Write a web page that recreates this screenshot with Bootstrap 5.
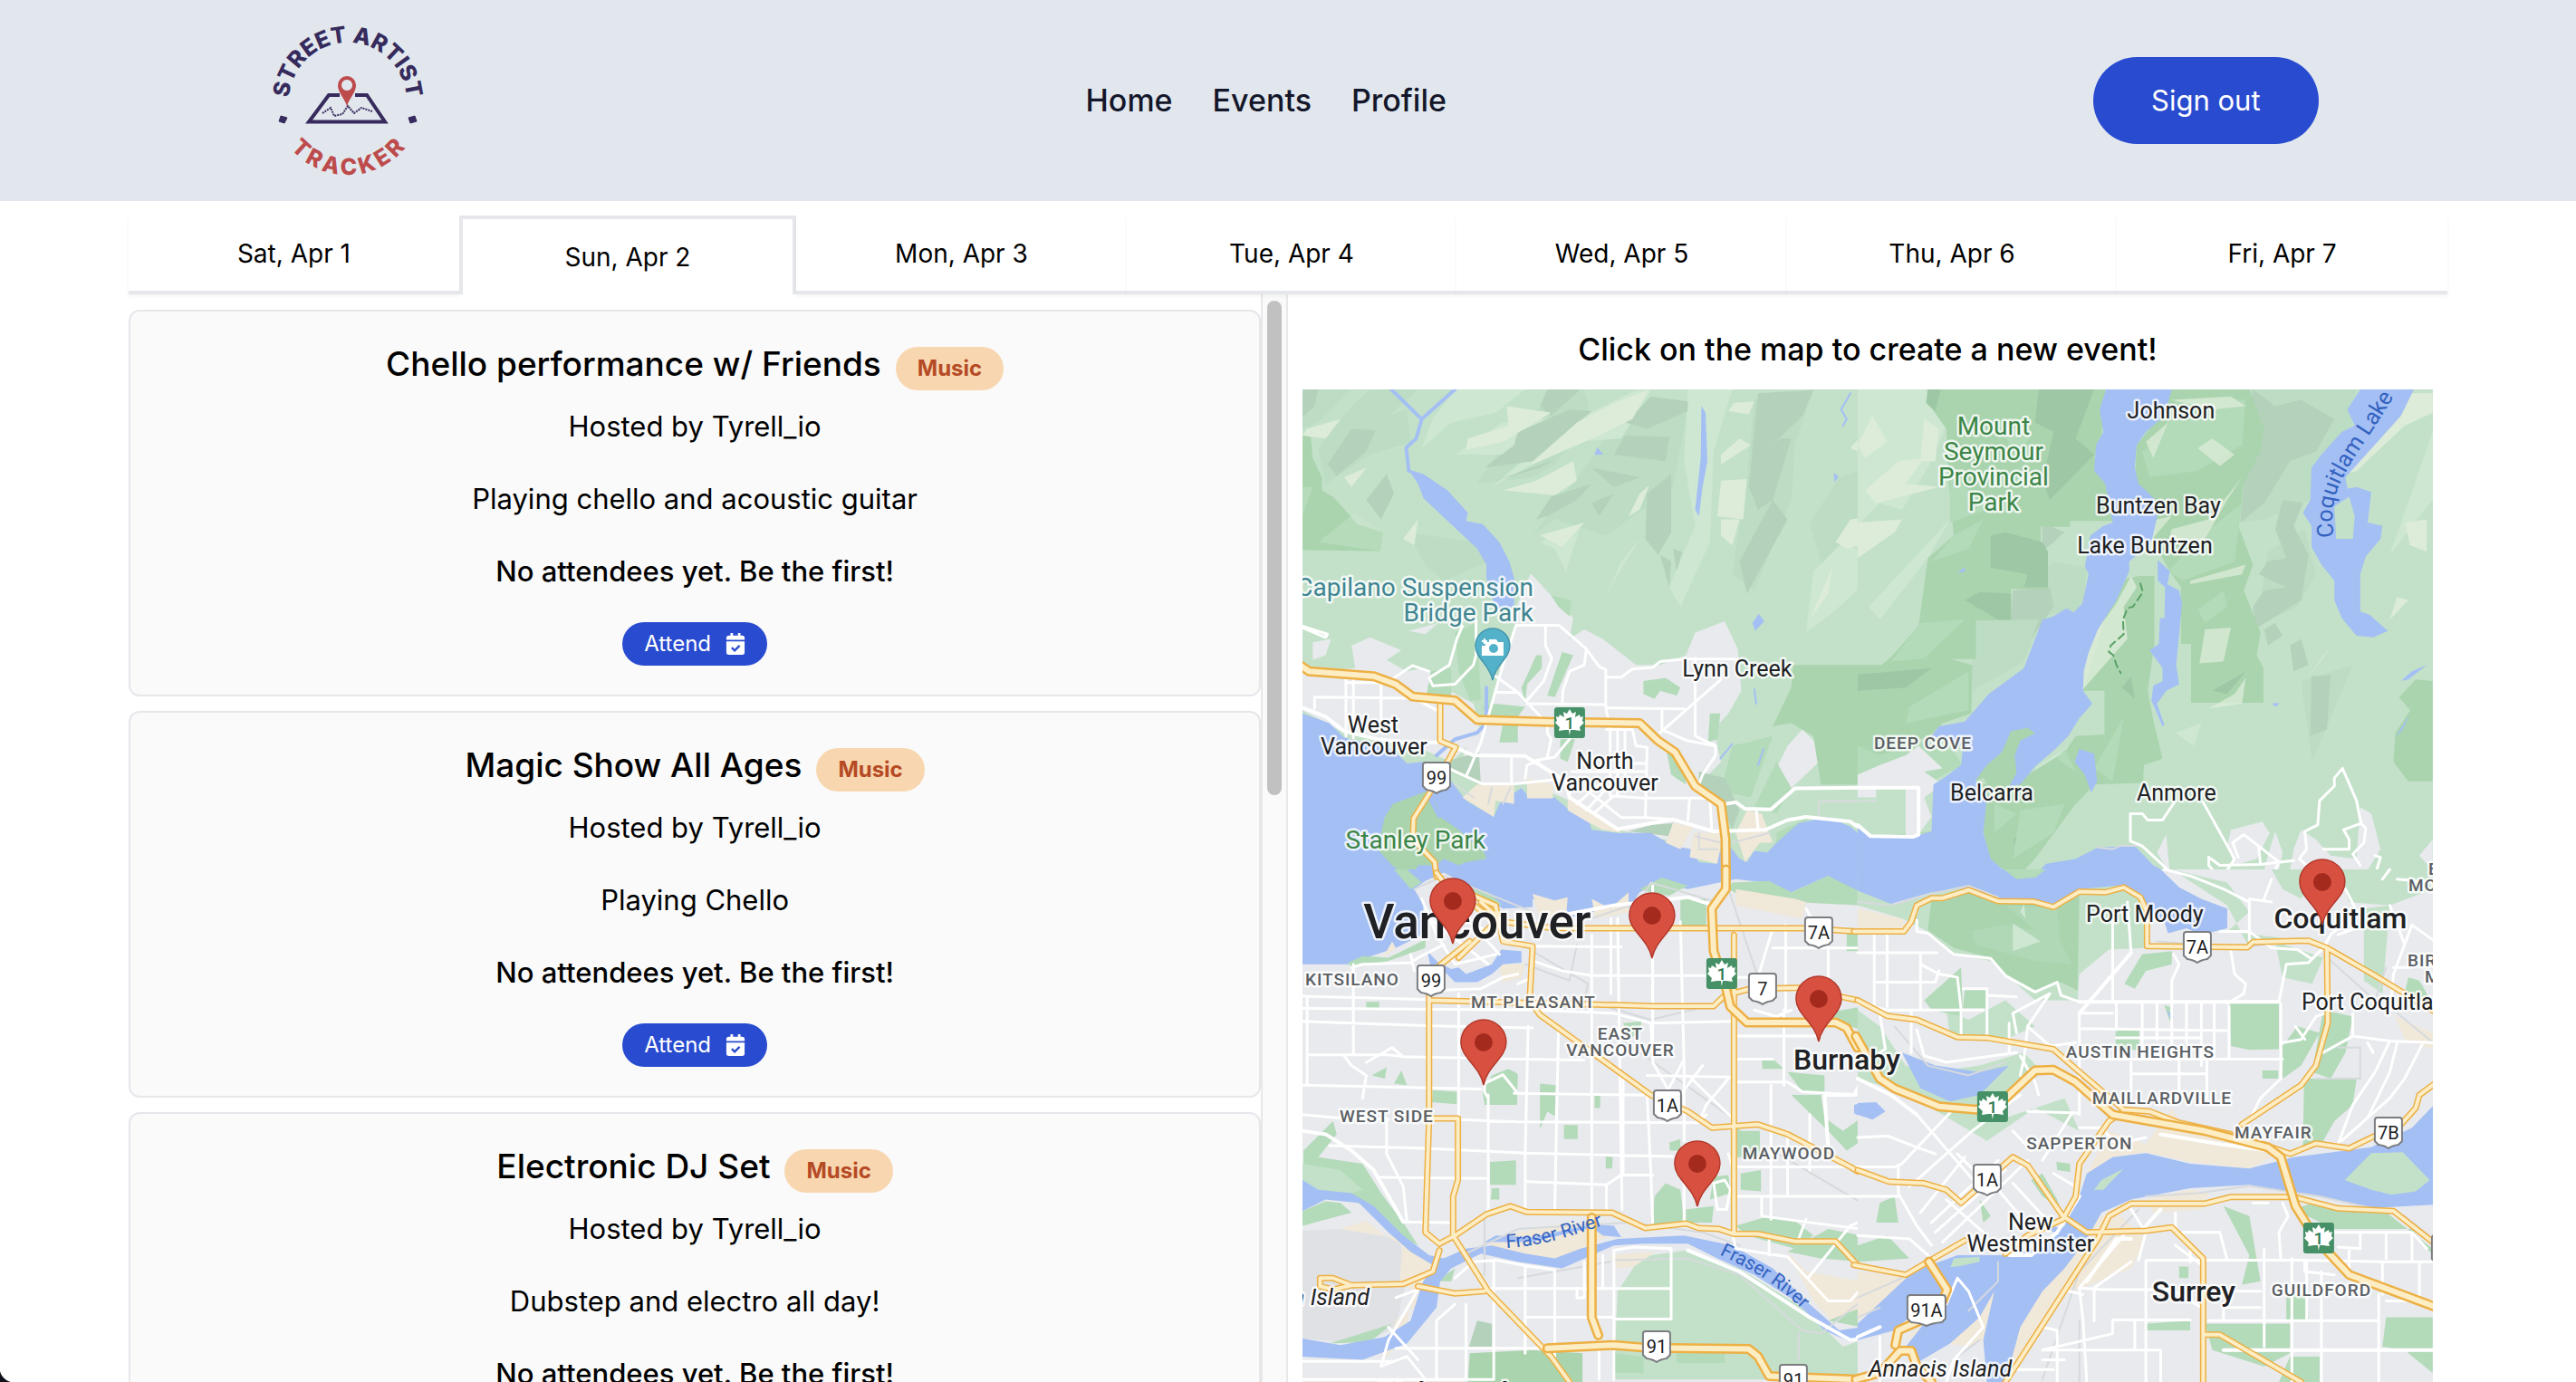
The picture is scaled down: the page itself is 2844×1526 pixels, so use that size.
<!DOCTYPE html>
<html lang="en">
<head>
<meta charset="utf-8">
<meta name="viewport" content="width=device-width, initial-scale=1">
<title>Street Artist Tracker</title>
<link rel="stylesheet" href="https://cdn.jsdelivr.net/npm/bootstrap@5.3.0/dist/css/bootstrap.min.css">
<style>
body{font-family:Inter,"Liberation Sans",sans-serif;color:#000;background:#fff;height:100vh;overflow:hidden}
.site-head{background:#e2e7ee;padding:11px 10%}
.site-head .logo{width:200px;height:200px}
.site-nav{gap:44px}
.site-nav a{font-size:34px;line-height:48px;font-weight:500;color:#14172a;text-decoration:none}
.btn-site{--bs-btn-bg:#284bd0;--bs-btn-color:#fff;--bs-btn-hover-bg:#1f3db0;--bs-btn-hover-color:#fff;--bs-btn-border-width:0}
.btn-signout{font-size:31px;line-height:48px;padding:24px 64px}
.page-body{padding:16px 5% 0;min-height:0}
.page-main{min-height:0}
.day-tabs{position:relative;z-index:1}
.day-tab{flex:1 1 0;border:0;border-bottom:4px solid #e5e7eb;background:#fff;font-size:28px;line-height:40px;padding:22px 0 21px;box-shadow:0 2px 4px rgba(0,0,0,.05);color:#000}
.day-tab.active{border:4px solid #e5e7eb;border-bottom:0;box-shadow:none}
.event-list{min-height:0;overflow:hidden;padding-top:17px;gap:16px}
.event-item{flex:none;background:#fafafa;border:2px solid #e5e7eb;border-radius:12px;padding:31px 32px 32px}
.event-title{font-size:37px;line-height:54px;font-weight:500;margin:0}
.event-item p{font-size:31px;line-height:48px;margin:0}
.event-item .host{margin-top:16px}
.event-item .about,.event-item .btn-attend{margin-top:32px}
.strong-line{font-weight:500}
.tag-pill{background:#f8d7b0;color:#b54a24;font-size:24px;line-height:32px;font-weight:700;padding:8px 24px;margin-top:8px}
.btn-attend{font-size:24px;line-height:32px;padding:8px 24px}
.scroll-track{width:30px;background:#fafafa;border:solid #e8e8e8;border-width:0 2px;padding:7px 5px}
.scroll-thumb{height:46%;background:#c1c1c1}
.map-side{padding:0 16px}
.map-title{font-size:34px;line-height:48px;font-weight:500;padding:37px 0 20px;margin:0}
.map-area{min-height:0;background:#c3e1c9}
.win-corner{position:fixed;left:0;bottom:0;width:16px;height:16px;background:radial-gradient(circle at 100% 0,transparent 16px,#101018 17px)}
/* map drawing */
.tile path{vector-effect:non-scaling-stroke;stroke-linejoin:round;stroke-linecap:round}
.fo{fill:#c3e1c9}.pk{fill:#aad4ae}.gr{fill:#b3dab9}.dk{fill:#b4d1bb}.dp{fill:#9ec8a5}.md{fill:#cde7d2}.lt{fill:#ddecd8}.sh{fill:#bcdcc4}
.ur{fill:#e8eaed}.sa{fill:#f0e8d9}.wa{fill:#a4bff4}.ai{fill:#e0e1e5}
.rv{fill:none;stroke:#a4bff4;stroke-width:4}.rv-s{stroke-width:2}.rv-l{stroke-width:6}
.rd{fill:none;stroke:#fff;stroke-width:3}.rb{fill:none;stroke:#fff;stroke-width:4}.rg{fill:none;stroke:#d7dadd;stroke-width:2}
.y1{fill:none;stroke:#edb044;stroke-width:11}.y2{fill:none;stroke:#fdedc4;stroke-width:6}
.z1{fill:none;stroke:#edb044;stroke-width:7}.z2{fill:none;stroke:#fdedc4;stroke-width:4}
.mtext text{font-family:Roboto,sans-serif;font-size:25px;fill:#202124;text-anchor:middle;paint-order:stroke;stroke:#fff;stroke-opacity:.8;stroke-width:5;stroke-linejoin:round}
.mtext .hood{font-size:19px;font-weight:500;letter-spacing:1px;fill:#5b5f64}
.mtext .green{font-size:28px;fill:#3c8548}
.mtext .teal{font-size:28px;fill:#3f8592;text-anchor:end}
.mtext .town{font-size:32px;font-weight:500}
.mtext .city{font-size:53px;font-weight:500}
.mtext .river{fill:#3362bf;stroke:none;font-size:21px}
.mtext .lake{font-size:25px}
.mtext .shield{font-size:20px;stroke:none}
.mtext .tc-num{fill:#2f7a53;font-size:19px;font-weight:500}
.mtext .start{text-anchor:start}.mtext .end{text-anchor:end}
</style>
<script src="https://cdn.jsdelivr.net/npm/bootstrap@5.3.0/dist/js/bootstrap.bundle.min.js"></script>
</head>
<body class="d-flex flex-column">

<header class="site-head d-flex justify-content-between align-items-center">
  <a href="#" aria-label="Street Artist Tracker" class="d-block">
    <svg class="logo d-block" viewBox="0 0 200 200">
      <defs>
        <path id="arcTop" d="M35 101A65 65 0 0 1 165 101"/>
        <path id="arcBot" d="M17 99A83 83 0 0 0 183 99"/>
      </defs>
      <g font-family="Inter,sans-serif" font-weight="800" font-size="25" text-anchor="middle">
        <text fill="#362b5c"><textPath href="#arcTop" startOffset="50%">STREET ARTIST</textPath></text>
        <text fill="#bd4b4b" letter-spacing="4"><textPath href="#arcBot" startOffset="51%">TRACKER</textPath></text>
      </g>
      <path d="M26 117l7 2-3 6-6-2zM167 119l7-2 2 6-7 2z" fill="#362b5c" stroke="#362b5c" stroke-width="1"/>
      <path d="M91 94H79L57 123.500H141L121 94H108" fill="none" stroke="#362b5c" stroke-width="4"/>
      <path d="M72 114l9-6 4 9 9-2 6-9 7 8 8-6 12 4" fill="none" stroke="#362b5c" stroke-width="2" stroke-dasharray="2 1"/>
      <path fill-rule="evenodd" fill="#bd4b4b" d="M99 106C96 97 89 91 89 83a10 10 0 0 1 20 0c0 8-7 14-10 23zM99 77a6 6 0 1 0 .1 0z"/>
    </svg>
  </a>
  <nav class="site-nav d-flex">
    <a href="#">Home</a><a href="#">Events</a><a href="#">Profile</a>
  </nav>
  <button type="button" class="btn btn-site btn-signout rounded-pill">Sign out</button>
</header>

<div class="page-body d-flex flex-column flex-grow-1">
  <div class="day-tabs d-flex" role="tablist">
    <button class="day-tab" role="tab">Sat, Apr 1</button>
    <button class="day-tab active" role="tab" aria-selected="true">Sun, Apr 2</button>
    <button class="day-tab" role="tab">Mon, Apr 3</button>
    <button class="day-tab" role="tab">Tue, Apr 4</button>
    <button class="day-tab" role="tab">Wed, Apr 5</button>
    <button class="day-tab" role="tab">Thu, Apr 6</button>
    <button class="day-tab" role="tab">Fri, Apr 7</button>
  </div>

  <main class="page-main row g-0 flex-grow-1">
    <section class="col-6 d-flex h-100">
      <div class="event-list flex-grow-1 d-flex flex-column h-100">
        <article class="event-item d-flex flex-column align-items-center text-center">
          <div class="d-flex align-items-start gap-3"><h2 class="event-title">Chello performance w/ Friends</h2><span class="tag-pill rounded-pill">Music</span></div>
          <p class="host">Hosted by Tyrell_io</p>
          <p class="about">Playing chello and acoustic guitar</p>
          <p class="about strong-line">No attendees yet. Be the first!</p>
          <button type="button" class="btn btn-site btn-attend rounded-pill d-flex align-items-center gap-3">Attend
            <svg width="22" height="26" viewBox="0 0 24 26"><path fill="#fff" d="M6 0h3v3h6V0h3v3h2q3 0 3 3v2H1V6q0-3 3-3h2zM1 10h22v13q0 3-3 3H4q-3 0-3-3z"/><path d="M7.500 17.500l3.500 3.500 6-6" fill="none" stroke="#284bd0" stroke-width="2.500"/></svg></button>
        </article>
        <article class="event-item d-flex flex-column align-items-center text-center">
          <div class="d-flex align-items-start gap-3"><h2 class="event-title">Magic Show All Ages</h2><span class="tag-pill rounded-pill">Music</span></div>
          <p class="host">Hosted by Tyrell_io</p>
          <p class="about">Playing Chello</p>
          <p class="about strong-line">No attendees yet. Be the first!</p>
          <button type="button" class="btn btn-site btn-attend rounded-pill d-flex align-items-center gap-3">Attend
            <svg width="22" height="26" viewBox="0 0 24 26"><path fill="#fff" d="M6 0h3v3h6V0h3v3h2q3 0 3 3v2H1V6q0-3 3-3h2zM1 10h22v13q0 3-3 3H4q-3 0-3-3z"/><path d="M7.500 17.500l3.500 3.500 6-6" fill="none" stroke="#284bd0" stroke-width="2.500"/></svg></button>
        </article>
        <article class="event-item d-flex flex-column align-items-center text-center">
          <div class="d-flex align-items-start gap-3"><h2 class="event-title">Electronic DJ Set</h2><span class="tag-pill rounded-pill">Music</span></div>
          <p class="host">Hosted by Tyrell_io</p>
          <p class="about">Dubstep and electro all day!</p>
          <p class="about strong-line">No attendees yet. Be the first!</p>
        </article>
      </div>
      <div class="scroll-track flex-shrink-0 h-100"><div class="scroll-thumb rounded-pill"></div></div>
    </section>

    <section class="map-side col-6 d-flex flex-column h-100">
      <h1 class="map-title text-center">Click on the map to create a new event!</h1>
      <div class="map-area flex-grow-1">
        <svg class="d-block w-100 h-100" viewBox="0 0 1248 1096" preserveAspectRatio="xMidYMin slice" role="img" aria-label="Map of Vancouver">
          <defs>
            <g id="pin"><path d="M0 0C-4-21-25-30-25-47A25 25 0 0 1 25-47C25-30 4-21 0 0Z" fill="#d85140" stroke="#b3382b" stroke-width="1.500"/><circle cy="-47" r="10" fill="#a42a1e"/></g>
            <g id="tch"><rect x="-17" y="-17" width="34" height="34" rx="3" fill="#459066"/><path fill="#fff" d="M0-15l3 5 4-2-1 6 5-3 1 3 3-1-1 5 2 2-5 5 1 4-7-1-4 0-1 6-1-6-4 0-7 1 1-4-5-5 2-2-1-5 3 1 1-3 5 3-1-6 4 2z"/></g>
            <path id="sh" d="M-12-17H12Q15-17 15-14V9L11 13Q4 14 0 17Q-4 14-11 13L-15 9V-14Q-15-17-12-17Z" fill="#fff" stroke="#7b7d80" stroke-width="2"/>
            <path id="shw" d="M-18-17H18Q21-17 21-14V9L17 13Q6 14 0 17Q-6 14-17 13L-21 9V-14Q-21-17-18-17Z" fill="#fff" stroke="#7b7d80" stroke-width="2"/>
            <path id="lakeLine" d="M1139 165C1130 104 1156 90 1206 6"/>
            <path id="fr1" d="M222 948C262 947 295 935 335 922"/>
            <path id="fr2" d="M450 950C490 970 520 982 560 1024"/>
          </defs>

          <!-- north-west: mountains and North Vancouver -->
          <g class="tile" transform="matrix(.408 0 0 .357 -7 -10)">
            <path class="fo" d="M17 28H1530V1515H17z"/>
            <path class="sh" d="M17 28H150L60 130 17 150zM200 28H330L250 110 300 90 310 190 200 230 80 320 60 210 150 80zM590 120L780 28 800 120 700 260 640 300 490 320 560 200zM860 130L1060 90 1020 330 840 480 700 430 640 480 800 240zM1240 60L1400 28 1350 200 1340 370 1240 650 1180 600 1220 300zM400 620L520 560 480 500 300 470 350 570zM1390 440L1470 300 1568 260 1568 420 1440 640z"/>
            <path class="md" d="M430 28H620L540 100 420 130 340 210 370 120zM560 130L770 110 600 230 430 230zM760 120L920 30 960 30 880 180 750 190 530 330 590 270zM1060 28H1180L1130 220 1120 500 1040 700 1010 640 1080 450 1050 250zM850 640L930 490 880 560 810 740zM730 590L770 450 660 500 700 520zM1400 590L1480 500 1568 550 1568 600 1450 720 1380 780z"/>
            <path class="dk" d="M17 28H60L50 80 17 115zM150 150L215 155 190 220 110 295 85 260zM245 290L265 350 230 430 190 370zM680 28H770L690 110 660 80zM740 90L800 95 690 200 640 250 510 270 590 200 600 160zM910 110L960 50 1060 65 1060 95 950 150 890 130zM890 170L1010 175 1000 250 860 230zM540 310L700 245 660 270zM690 360L800 320 760 370 680 420 650 430zM1250 40L1400 30 1370 110 1270 220 1310 180 1340 180 1290 370 1250 400 1225 330zM950 350L1015 290 1015 470 980 540 945 490zM1290 370L1330 430 1220 660 1200 560zM1020 520L1045 530 1030 590zM800 270L930 300 860 330zM800 380L860 350 820 420zM985 540L1015 560 1010 640z"/>
            <path class="lt" d="M570 80L690 100 560 190 460 215 465 180 575 140zM860 70L955 28 910 120 820 170 630 265 760 130zM30 150L120 120 80 180 17 170zM650 310L750 250 760 310 700 355 560 340zM1150 310L1220 305 1210 430 1140 420zM1150 430H1200L1180 510 1150 480zM1185 70L1240 65 1225 105 1170 95zM1150 230L1200 180 1230 200 1150 260zM930 350L955 325 930 400 900 420zM290 490L330 430 320 510zM1460 500L1500 430 1568 420 1568 500 1490 520zM1450 580L1440 660 1390 740zM660 480L780 440 720 515zM130 300L190 270 150 330zM1500 210L1568 120V240zM1520 330L1568 290V370z"/>
            <path class="pk" d="M17 170L40 175 45 240 70 300 70 340 100 360 140 410 165 445 235 470 228 528 17 525z"/>
            <path class="md" opacity=".35" d="M17 330L45 330 17 420zM60 500L160 410 235 470 228 528z"/>
            <path class="ur" d="M17 905L160 890 150 820 200 795 285 835 245 865 300 900 350 890 400 950 480 1000 500 1090 420 1180 300 1120 130 1090 17 1020zM45 810L95 800 80 850 45 865zM305 775L385 750 350 785zM635 597L690 665 750 735 740 800 780 770 830 800 920 880 985 880 1055 850 1080 780 1160 745 1195 830 1205 960 1170 1030 1130 1080 1150 1180 1090 1250 1150 1310 1145 1400 1070 1470 1000 1420 870 1390 740 1300 640 1250 500 1250 440 1200 470 1110 505 1080 540 950 560 850 595 760 600 690zM1330 1130L1370 1080 1415 1130 1415 1180 1340 1262 1300 1200zM1190 1130L1230 1115 1240 1180 1180 1230z"/>
            <path class="pk" d="M1345 880H1530V1250H1480L1420 1250 1400 1100 1340 1060 1290 1070 1340 950z"/>
            <path class="gr" d="M365 900L420 890 420 990 350 990zM500 1010L540 1000 620 1010 600 1040 530 1040zM430 780L490 750 500 990 470 990 440 900zM690 665L745 680 740 730 710 700zM720 840L750 850 700 980 680 975zM650 850H665V890L625 940 620 1000 610 950zM940 930L1000 920 1040 950 1030 975 985 960 970 985 940 970zM715 1110L755 1110 735 1180 715 1170zM1120 1030L1148 1030 1140 1110 1115 1120zM1000 1130L1050 1190 1055 1250 1015 1220zM1180 1130L1290 1100 1230 1290 1150 1270zM1300 1180L1340 1260 1300 1340 1240 1320zM1300 1400L1400 1345 1300 1435zM560 1060H600V1120H550z"/>
            <path class="dk" d="M400 1180L495 1150 500 1250 430 1210zM1090 1210L1160 1230 1200 1330 1180 1390 1150 1310 1090 1260zM900 1395L960 1375 1020 1370 1010 1410z"/>
            <path class="wa" d="M17 1030L90 1060 130 1105 260 1140 300 1185 345 1180 420 1240 460 1300 535 1350 550 1310 610 1260 630 1290 700 1290 740 1330 790 1350 800 1390 870 1400 960 1400 1020 1440 1070 1450 1090 1490 1135 1495 1160 1420 1200 1480 1220 1490 1240 1455 1275 1460 1300 1430 1360 1370 1440 1350 1500 1380 1530 1410V1530H17zM303 275L345 290 410 340 465 410 460 435 505 445 550 500 577 560 590 610 590 700 540 710 515 610 515 570 490 520 410 435 345 365 330 320zM808 230L815 208 832 230zM1235 750L1252 722 1267 745 1242 775zM1455 285L1468 298 1457 315zM1525 150L1535 162 1525 180z"/>
            <path class="wa" d="M1097 80L1108 100 1113 250 1100 330 1090 420 1080 400 1095 240z"/>
            <path class="rv" d="M258 28L340 120 430 28M340 120L325 180 298 208 305 280M515 950L515 1060 490 1090 430 1110 380 1160"/>
            <path class="rv rv-s" d="M1500 40L1475 90 1490 120 1480 140M1240 955L1245 1000M1265 1140L1250 1190M1180 1125L1148 1170"/>
            <path class="sa" d="M450 1290L490 1250 590 1250 590 1310 540 1300 535 1350zM625 1230L695 1250 695 1293 625 1293zM735 1280L870 1385 880 1400 830 1390 795 1370 735 1330zM1020 1370L1075 1380 1040 1450 1000 1430zM1075 1400L1155 1400 1140 1495 1065 1475zM1220 1330L1260 1340 1290 1430 1255 1430 1215 1490 1190 1400z"/>
            <path class="pk" d="M262 1310L355 1270 380 1310 390 1350 440 1390 510 1460 515 1480 460 1490 440 1500 400 1480 380 1500 330 1500 310 1540 260 1500 220 1450 240 1350z"/>
            <path class="wa" d="M350 1280L365 1275 392 1350 385 1355zM315 1520L340 1500 370 1510 320 1530z"/>
            <path class="rg" d="M1530 1302H1415V1345M430 1250L480 1290M1080 1410L1150 1430M1180 1430L1280 1400M530 1260L520 1310M580 1260L560 1310M1090 1400V1450H1140"/>
            <path class="rd" d="M595 758H712L785 830 820 885 838 895V1010L850 1080M838 918H880L910 893 965 888 985 870 1050 862 1195 862M1080 860V1100L1135 1130 1135 1160 1100 1220 1090 1250M1150 925L985 1090M675 760V820L692 860 670 930 625 990M540 915L600 965 665 1045M625 1000L835 1003M840 1013L1050 1016M540 965H600M785 835L780 880 740 900 722 960 720 1003M595 758L560 880 540 960 515 1060 500 1120 470 1200 460 1225M450 760L435 800 415 880 360 920 370 945 430 940 480 880 487 850V740M265 920L315 882 360 900M17 765L80 795 85 785 17 760M50 1015V980L320 983 380 1020M135 925V1100M155 925V1105M230 935V1060M135 935H230M583 1165V1240M660 1175L625 1190 620 1230M680 1065V1090L690 1110 680 1165M740 1110L700 1165 650 1175M850 1075V1285L940 1292 1120 1292M870 1080V1280M890 1080V1220M910 1080L920 1130 950 1135 945 1350M745 1210H945M905 1185H945M790 1270L880 1352 945 1352 1020 1358M1065 1295L1060 1360M1120 1300L1125 1390M990 1015V1080L1060 1115 1135 1130M760 1310L830 1240M785 1330L850 1250M805 1340L860 1285M840 1080H910M1245 1325L1250 1385M395 1190L460 1225 505 1248 590 1248 700 1235"/>
            <path class="rb" d="M17 1012L80 1040 130 1085 220 1110 300 1120 380 1120M430 1135L480 1160 620 1162 660 1190 730 1240 740 1290 870 1388 1020 1358 1130 1395 1270 1390 1330 1360 1380 1350 1500 1365 1550 1405M1160 1310L1190 1305 1215 1325 1285 1327 1350 1262 1530 1260"/>
          </g>

          <!-- north-east: Indian Arm, Buntzen and Coquitlam lakes -->
          <g class="tile" transform="matrix(.408 0 0 .357 613 -10)">
            <path class="fo" d="M0 28H1568V1515H0z"/>
            <path class="md" d="M0 28H180L250 110 200 250 120 400 60 380 0 450zM560 1250L480 1200 570 1130zM1440 540L1568 120V350zM860 1090L930 1060 910 1130zM1210 930L1285 810 1260 860zM250 430L190 550 60 740 30 700z"/>
            <path class="lt" d="M0 200L40 110 80 190 20 240zM20 340L110 250 180 240 130 320 220 330 50 380zM0 440L120 430 100 470 0 550zM1320 290L1500 40 1556 40V100L1480 140 1350 280zM1480 440L1540 430V530L1495 510zM1440 740L1460 670 1490 680zM180 120L220 150 210 250 170 250z"/>
            <path class="sh" d="M1060 28H1350L1330 100 1340 140 1250 240 1225 370 1100 430 1040 440 1045 320 1100 150zM430 650L530 560 620 580 610 710 500 730 450 870 310 960 310 880 320 742H415zM1110 530L1210 460 1240 600 1190 700 1080 760zM1200 930L1340 880 1230 1180z"/>
            <path class="dk" d="M1070 28L1130 80 1200 60 1290 120 1240 220 1170 250 1100 380 1035 440 1045 320 1100 150 1060 90zM1150 370L1205 380 1180 450 1220 540 1200 680 1075 770 1070 700 1100 650 1160 640 1085 600 1110 560 1160 550 1130 460zM1100 770L1130 750 1150 790 1110 820zM1170 820L1200 800 1220 880 1180 900zM1228 915L1280 912 1270 1080 1225 1100zM420 650L520 640 530 700 470 800 490 740 415 740zM500 440L560 470 500 530z"/>
            <path class="pk" d="M190 28H670L660 170 640 240 690 330V435H575V453H495V530H515V645H415V742H320V862H252L310 880 308 1030 230 1060 195 1100 170 1110 0 1220V880H65L95 850 165 760 190 550 260 480 245 300 240 150 190 70z"/>
            <path class="dp" d="M190 28H225L210 95 185 70zM490 28L640 28 590 180 640 230 520 370 500 310 530 160 480 130zM360 480L400 470 500 500 515 530 515 640 450 640 460 600 360 580zM290 680L330 655 415 660V740L380 740zM100 900L200 890 130 950 0 960V910z"/>
            <path class="gr" d="M250 280L350 400 250 440zM260 480L340 430 300 520 200 560zM170 750L290 740 180 860 90 870zM380 130L470 170 430 240zM140 1010L300 900 300 1020 130 1060z"/>
            <path class="pk" d="M850 28H1060L1100 150 1090 220 1045 320 1030 450 1070 570 1045 650 1090 780 1080 850 1098 890V997H902V815H875V640L850 600 820 540 800 500 810 420 750 320 755 200 790 150z"/>
            <path class="gr" d="M860 60L1050 60 1040 200 920 280 790 300 770 220 820 180zM930 480L1040 380 1020 560 880 620 840 590zM920 710L990 650 1000 700 940 750z"/>
            <path class="lt" opacity=".75" d="M850 60L1010 50 1050 80 960 90zM780 190L840 130 800 240zM920 210L960 180 1020 230 980 265zM810 430L850 420 790 500zM850 460L950 430 1040 300 1000 370 930 510 840 500zM900 620L1050 570 1040 600 900 630zM940 770L1010 765 990 870 925 875zM950 1015L1020 970 1050 920 1040 1000z"/>
            <path class="pk" d="M610 960L700 620 760 605H803V815L785 960 800 1050 825 1170 775 1190 772 1245 640 1250 600 1300 590 1310 480 1480 430 1540 355 1480 340 1390 345 1300 560 1150 590 1100 668 1095V960z"/>
            <path class="lt" opacity=".8" d="M740 605L755 640 720 700 730 800 610 955V890L650 770 700 690z"/>
            <path class="dp" d="M740 915L750 985 715 950zM420 1420L470 1380 430 1450zM1050 900L1000 970 960 960z"/>
            <path class="gr" d="M560 1140L590 1210 540 1170zM720 1040L690 1240 640 1200zM440 1330L560 1310 530 1400 420 1480zM370 1310L430 1340 370 1400zM0 1130L60 1160 200 1110 260 1150 285 1190 200 1240 0 1250zM30 1410L200 1395 150 1455 120 1420z"/>
            <path class="pk" d="M1510 925L1556 930V1240L1490 1240 1450 1180 1455 1090 1495 1020 1465 980z"/>
            <path class="ur" d="M0 1220L60 1190 130 1160 165 1130 230 1200 180 1210 230 1250 180 1290 200 1350 160 1410 130 1410 130 1260 50 1260 50 1290 0 1290zM810 1460L835 1405 845 1525zM1000 1440L1010 1390 1095 1365 1115 1400 1080 1480 1020 1500zM1110 1470L1130 1395 1150 1460 1140 1515 1100 1515zM1180 1450L1200 1390 1240 1420 1280 1470 1350 1480 1360 1320 1390 1340 1415 1450 1380 1515 1170 1515zM1520 1470L1556 1420V1515z"/>
            <path class="wa" d="M672 28H850L830 110 780 160 755 200 750 270 760 320 785 345 805 370 810 425 795 500 735 560 735 590 700 680 650 770 625 840 612 900 610 960 635 1000 600 1045 570 1100 535 1140 480 1195 440 1250 410 1255 350 1290 340 1400 360 1480 420 1540H0V1385L30 1410 150 1412 200 1395 205 1250 235 1228 280 1190 285 1130 200 1100 220 1070 290 1055 355 970 450 890 500 740 530 730 565 705 585 718 608 690 625 600 615 575 630 480 665 450 690 440 670 320 640 280 645 200 665 160 655 90zM1360 28H1505L1470 110 1320 300 1325 335 1350 330 1390 345 1380 440 1420 450 1415 490 1375 545 1360 600V715L1385 725 1435 775 1395 795 1350 790 1310 735 1290 680V620L1255 570 1228 515V450L1205 410 1225 370 1228 270 1255 230 1310 160 1345 140 1325 90zM812 555L845 590 838 630 870 650 878 690 862 880 870 940 835 960 810 1000 830 1065 825 1070 795 990 800 945 825 930V890L790 835 815 815 818 735H830L832 640 812 620zM600 1140L640 1155 648 1240 632 1275 615 1220 587 1180zM270 595L290 578V592zM1120 1000L1142 997 1132 1010zM1470 930L1500 900 1540 880 1490 925zM1455 1105L1495 1030 1475 1080z"/>
            <path class="wa" d="M420 1540L480 1530 510 1495 590 1480 650 1445 750 1440 800 1500 850 1530H400z"/>
            <path class="pk" d="M415 1085L460 1075 480 1092 440 1115 425 1160 430 1215 410 1255 350 1290 320 1235 350 1190 390 1150z"/>
            <path class="fo" d="M1290 390L1330 360 1345 420 1340 490 1295 490zM340 1230L320 1240 350 1250z"/>
            <path d="M765 628L772 655 745 700 730 705 718 740 720 785 685 820 680 840 692 850 700 880 712 905" fill="none" stroke="#58a266" stroke-width="2" stroke-dasharray="8 5"/>
            <path class="rg" d="M0 1300H50M650 1445L690 1450 710 1440 755 1440"/>
            <path class="rd" d="M860 1300L825 1360H785L770 1340H738V1425L770 1440 850 1525M935 1305L1020 1480M1215 1500L1195 1480 1215 1450 1210 1395 1245 1375 1250 1300 1290 1255V1230L1312 1200 1350 1300 1362 1370 1375 1385 1370 1430 1340 1465 1360 1500M1362 1370L1315 1390 1330 1420 1330 1450 1260 1450M950 1475L980 1500 1090 1497 1180 1485M1020 1480L1000 1515M1090 1497L1085 1440 1045 1405 1015 1430 1030 1475M950 1475V1500L980 1540M1085 1440L1140 1490 1120 1540M1400 1470L1415 1475 1400 1530M1568 1525H1430L1390 1545 1340 1530"/>
            <path class="rb" d="M0 1260H165V1405L150 1412 35 1410 0 1375"/>
          </g>

          <!-- south-west: Vancouver -->
          <g class="tile" transform="matrix(.408 0 0 .361 -7 530)">
            <path class="ur" d="M17 0H1530V1568H17z"/>
            <path class="wa" d="M17 0H1530V60L1500 70 1440 20 1340 70 1270 40 1190 30 1060 60 980 40 930 70 900 120 800 130 730 150 640 90 640 115 560 120 500 80 450 40 400 10 350 35 320 60 345 110 340 200 270 240 190 270 140 290H17z"/>
            <path class="gr" d="M265 0H300L340 40 310 60zM450 50L520 70 560 110 500 90zM930 60L990 25 1060 50 1010 80 960 70zM1180 40L1280 35 1340 70 1440 20 1530 70V110L1350 100 1250 110 1170 60zM1040 90H1110V190L1040 180zM140 285L180 265 250 270 350 215 350 240 250 280 150 300z"/>
            <path class="sa" d="M640 75L700 95 735 85 730 155 660 150zM800 90L850 120 900 70 900 130 810 150zM1190 60L1350 90 1380 100 1370 150 1190 110zM550 290L620 290 610 330 560 345zM235 270L260 220 270 240z"/>
            <path class="wa" d="M355 250L385 285 420 305 440 300 460 320 530 290 555 245 610 250 610 285 560 290 530 320 490 345 430 345 400 310 365 300z"/>
            <path class="gr" d="M190 405H225V425H190zM370 675L435 680V718L368 712zM510 720L505 680 530 630 575 610 600 625 598 720zM660 655L703 660 700 755 680 740 660 795zM725 782H762V825H725zM525 895L595 890V965H525zM530 975H550V1010H527zM838 878L857 880 855 915H838zM808 690H823V730H808zM205 630L245 605 240 640zM265 655L285 615 300 660zM965 1085L970 1000 1000 960 1040 980 1050 1080zM1055 1040L1130 1030 1125 1080H1055zM1205 800H1255V880H1190V790zM1203 930L1258 920V985L1203 980zM1260 580L1290 580 1320 610H1262zM1330 620L1430 630V690L1370 680zM1340 690L1420 690 1430 760 1480 800 1530 760V830L1490 860 1440 800zM1010 835L1040 825V860H1012zM885 470L935 465 930 500 900 520zM1130 940L1170 935 1175 990 1120 1010zM1490 195H1540V250H1490zM1190 1090L1280 1060 1350 1075 1400 1120 1350 1160 1220 1120zM1430 440L1530 420V490L1500 480zM1440 1100L1530 1120V1200L1420 1190 1330 1170zM20 860L100 770 110 810 60 880 180 900 230 990 290 1080 330 1150 280 1120 190 1030 90 990 20 960z"/>
            <path class="fo" d="M17 990V900L120 920 180 980 150 990 60 980z"/>
            <path class="pk" d="M465 1568L470 1480 640 1470 775 1480V1568z"/>
            <path class="dk" d="M490 1380L530 1390V1460H468z"/>
            <path class="ai" d="M17 1105L120 1100 280 1130 300 1250 270 1400 180 1450 17 1435z"/>
            <path class="sa" d="M120 1100L190 1075 240 1120 340 1180 370 1210 330 1300 280 1260 290 1130zM520 1150L560 1120 740 1080 800 1080 850 1120 790 1150 700 1195 600 1180zM850 1180L970 1170 930 1215 860 1220zM1380 1230L1530 1260V1350L1450 1380 1400 1320 1330 1170zM270 1380L330 1330 320 1290 290 1430 230 1510z"/>
            <path class="fo" d="M870 1290L915 1215 960 1180 1060 1165 1200 1220 1370 1340 1480 1460 1530 1440V1560H860z"/>
            <path class="gr" d="M1030 1480H1160V1510H1030zM860 1480L940 1490V1540H860zM1440 1380L1530 1340V1400zM380 1260L430 1220 420 1260zM17 1090L150 1050 120 1020 80 1015 17 1045zM90 1450L260 1390 200 1445z"/>
            <path class="wa" d="M17 950L60 980 150 990 210 1030 290 1120 360 1180 400 1190 460 1160 530 1150 620 1175 700 1190 770 1160 870 1130 1050 1120 1180 1150 1290 1220 1390 1330 1470 1410 1530 1400V1430L1500 1445 1430 1410 1350 1320 1240 1240 1140 1190 1060 1145 940 1145 860 1150 720 1220 600 1200 500 1175 420 1220 390 1260 380 1340 300 1450 180 1500 17 1490V1435L120 1455 240 1430 310 1380 340 1270 370 1210 310 1170 250 1110 170 1020 80 1010 17 1045z"/>
            <path class="wa" d="M510 1140L540 1120 640 1125 800 1085 860 1090 880 1125 830 1120 800 1095 640 1140zM1510 720L1530 715V760L1510 745z"/>
            <path class="rg" d="M450 1180L600 1100 900 1080 1100 1110 1200 1150M510 1060V1240M860 1195L1060 1190 1200 1240 1370 1410 1420 1420 1530 1320M1360 1500V1420M640 250L790 350 780 400 960 460 1180 400M620 290L740 340 760 230M880 520L1180 760M1290 860L1530 1020M1170 60L1250 330M800 150L930 100 960 40 1140 100M320 60L400 20 640 130M600 1250L850 1200"/>
            <path class="rd" d="M17 388L360 398M17 465L350 478 420 480 640 485M17 425L640 430 860 440 960 470 1180 465M30 567H250L290 573 600 580 780 583M17 660L360 668 500 672M590 685L900 690 940 690M17 750L110 760 250 765M440 765L600 772 1090 775 1110 750M90 845L350 853 620 868 1020 878M220 942L515 945M625 955L840 965 880 935 965 935M290 1078L420 1080M600 1282H1010M500 1282H855M860 1375H1015V1160L915 1155 860 1165V1560M17 1505H260M270 1465H670M30 390V660M155 290V565M150 300L180 290 310 285 330 270 400 230M440 380V760M520 690V1060M520 700L510 680 510 655 560 628 600 685M628 480L620 870V1045M710 490L700 1045M800 200V1045M870 150L882 1040M965 50V590L1010 680M852 150V380M960 470L965 580M885 640V930L840 965V1040M1040 160L1050 600V830M950 690L960 930 965 1080M1290 180L1250 330M1325 170V430M1440 180V480M1290 240H1530M1190 180V1100M1190 580H1290M1190 650H1330L1370 680 1530 690M1285 660V1070M1390 750V920M1330 800V1000M1190 910H1530M1190 1000H1530M1260 1000V1060L1390 1080 1530 1100M1180 330H1290M800 325H1110M600 235L880 237M640 280L720 310 800 325M600 350L640 330M380 370L500 365 560 330 600 320M340 90L380 200 430 290 540 260M360 150L520 290M390 120L540 200M430 110L550 260M320 310L310 260M270 1310L330 1285 250 1440 230 1520M430 1250L480 1200 540 1195 610 1210 700 1225V1500M535 1195V1560M620 1210V1480M780 1200V1310H760V1280M830 1180V1280M460 1330V1560M380 1560V1380L430 1330M17 1560H530M250 1400L330 1500M230 1520L300 1490 350 1560M950 630L1180 635M1050 580L1000 690M1170 640L1110 720 1090 775M1100 600L1040 690M1070 640L1180 760M130 570L150 600 190 630 180 700M245 760V870L290 970 300 1078M190 590L260 545 290 573M620 1370H860M1050 880V1080M1170 870L1180 910M1380 120L1440 240M820 1420V1560M1540 1070L1500 1090 1385 1250M1360 1130L1380 1070M1280 1130V1180M1180 1110L1190 1160 1330 1185 1440 1320 1500 1320 1530 1280M1130 960L1160 950 1175 980 1165 1040 1140 1040zM1190 510H1420M1320 430V660M1240 430L1300 450 1340 430"/>
            <path class="rb" d="M17 800L80 810 150 860 210 920 290 1078M720 140L860 110 1060 85 1115 105M1060 1165L1200 1230 1390 1370 1500 1440 1530 1435M1430 690L1440 850M1430 690L1510 690 1535 640"/>
          </g>

          <!-- south-east: Burnaby, Coquitlam, Surrey -->
          <g class="tile" transform="matrix(.408 0 0 .361 613 530)">
            <path class="ur" d="M0 0H1568V1568H0z"/>
            <path class="fo" d="M0 60L100 105 200 70 300 40 640 50 740 40 780 90V240L680 245 600 320 595 400 480 400 360 280 260 260 190 190 120 150 0 110zM850 0L1000 40 1060 130 1000 190 1150 210 1060 240 1000 110zM1120 0H1250L1200 90 1150 60zM1300 0H1556V60L1440 110 1330 100zM0 430L60 480 130 600 200 620 330 600 450 560 500 620 420 690 330 700 400 760 560 700 600 800 480 730 350 830 200 730 120 680 0 640zM240 430L300 460 400 400 480 480 380 530 250 510zM1130 220L1260 270 1230 350 1150 330zM1370 120L1440 110 1420 380 1370 340z"/>
            <path class="pk" d="M200 90L300 55 380 95 540 115 600 80 595 370 550 345 480 370 400 320 360 270 260 240 190 185z"/>
            <path class="gr" opacity=".7" d="M310 190L400 170 540 200 580 290 480 280 320 230zM400 110L540 120 550 250z"/>
            <path class="md" d="M420 165L495 220 420 250zM450 105L455 150 440 130z"/>
            <path class="sa" d="M0 120L120 150 130 185 0 195zM780 1010L900 980 950 990 930 1040 800 1050zM620 930L680 800 780 840 850 730 870 770 1000 800 1150 860 1060 915 900 895 780 865 690 880zM0 1230L130 1245 200 1220 0 1380zM130 1430L350 1270 390 1290 340 1440 300 1460zM640 1070L700 1050 780 1130 740 1220 560 1300 420 1540 400 1568 370 1568 440 1400 540 1210zM1455 450L1556 500V550L1480 520z"/>
            <path class="gr" d="M770 260L850 250 850 290 780 310 750 365 722 350zM1008 410H1140V550L1060 552 1010 540zM698 488H762V552H698zM830 415L855 425 845 465zM1208 640H1350L1340 720 1290 770 1255 840 1205 850zM1260 430L1340 450 1320 560 1280 640 1230 620zM1150 540L1190 480 1250 500 1200 600 1150 640zM470 950L500 930 540 1010 550 1040 500 1000zM538 895L575 900V925L540 920zM1095 615H1138V640H1095zM180 400L280 300 285 450 200 430zM290 365H350V425H285zM990 1030L1060 1180 1040 1270 1090 1260 1060 1060zM1230 1020L1420 1040 1556 1160V1180L1500 1100 1290 1100 1180 1040zM1430 1370L1556 1370V1540L1480 1470 1420 1460zM940 1390L1170 1390V1480L1100 1520 960 1470zM1160 1300L1215 1300 1220 1380H1160zM870 1215H895V1250H870zM0 1150L80 1120 140 1190 0 1200zM300 1200L380 1210 390 1260 280 1240zM1170 1490H1250V1568H1140zM780 1390L900 1380V1410H780zM1490 330L1520 340 1550 400 1470 430zM60 1020L100 1000 110 1080 50 1080zM330 1010L360 1060 340 1080z"/>
            <path class="wa" d="M0 0H820L870 55 930 90 1000 120V180L930 200 890 180 840 195 830 160 775 120 740 60 700 50 600 60 530 110 380 90 300 55 200 70 90 105 0 65zM120 560L210 600 330 620 410 600 330 690 250 710 170 670zM0 715L50 712 75 740 40 765 0 750zM835 430L855 450 850 465z"/>
            <path class="gr" d="M395 0H510L480 25 430 30z"/>
            <path class="wa" d="M1568 710L1500 790 1390 850 1180 880 1060 915 900 900 780 868 690 880 620 930 600 1000 560 1090 480 1160 420 1180 270 1180 150 1230 0 1390V1440L100 1410 190 1320 250 1290 130 1460 160 1510 250 1450 330 1370 370 1290 340 1440 350 1568H400L440 1400 500 1290 560 1220 620 1130 660 1050 740 1010 900 975 1060 965 1250 1000 1400 1035 1568 1025z"/>
            <path class="fo" d="M1318 950L1390 868 1475 865 1548 950 1510 985 1445 995 1390 980zM640 980L660 950 720 915 690 950 665 980zM260 1190L330 1185 330 1200 250 1220z"/>
            <path class="rv rv-l" d="M70 1400L230 1240M240 1225L400 1215M530 1100L620 1130"/>
            <path class="rg" d="M0 100L90 110 200 75 300 50 380 85M500 1560L600 1230 760 1040M330 1440L270 1490M0 1310L120 1250M0 1370L60 1340M780 1000L920 990 1060 968 1250 1000 1480 1060 1568 1140M1240 640H1360V545H1300M1260 260L1400 400 1430 300M1460 440L1568 540M380 1200V1260L300 1350M810 220L1040 240 1150 220M600 1380V1568M100 480L190 600 300 630 400 590"/>
            <path class="rd" d="M190 195L260 260 360 272 400 325 480 375 540 345 550 385 600 405M45 190V420M80 195V420M0 255H215M50 345H210L220 310M170 255V430M170 290L220 320 270 330 280 430M145 430V560M0 410L80 430 340 430M285 365H350V510M280 430V510M350 385L430 390M410 470V560M160 490L180 570 240 590 430 560M60 440L75 550 60 560M600 600V440L740 255 730 100M690 160V405M600 405H1140M855 260L870 290 850 340V580M700 405V490M770 405V580M810 405V520M930 405V600M890 405V530M965 405V580M600 440H690M600 487L1000 493M700 515H925M650 580H1150M740 590V700M870 580V680M945 580V700M740 625H945M1005 420V580M1145 410V640L1090 700 1050 790M1140 405L1160 290 1220 285 1260 240 1280 200 1320 160M1010 250L1020 320 1050 350 1045 380 1000 410M980 190L1060 190 1120 240 1190 245 1230 275M1150 530L1200 520 1240 450 1265 440M1185 480L1210 520M1260 560L1340 510 1440 525 1556 530M1340 440V510M1440 525L1400 620 1340 720 1300 840M1530 530L1480 640 1440 700 1310 830M1460 530L1440 620 1380 760M1380 530L1395 560M1440 440L1450 320 1500 170 1556 215M1450 300H1490M1440 110L1480 230M1060 220V90L1120 100M1060 100L990 60 900 20 830 0M1100 90L1120 30M1320 60L1370 170 1300 200M1460 30L1556 40M1420 30L1440 0M0 640L90 690 160 750 320 960 350 1000M0 820L80 815 160 850 210 870M0 910H100L120 900M110 910V990L160 1090 200 1150M120 900L270 720M140 970L310 800 440 690M170 1050L290 880M200 1080L380 890M0 1000H110M210 1110L400 920M230 1140L460 890M270 870L350 960M420 800L470 860M420 960L510 1070M380 980L470 1100M240 1010L350 1120M460 740L600 745M580 745L550 800 500 890M440 630L450 580 460 480 520 380 420 440 430 500M490 690L480 650 440 570M600 750V600M460 480L520 540 590 530M600 790H660L700 840 780 820M530 930L590 970M0 1120L140 1130 190 1180M740 1040L780 1110 760 1195M780 1195H1200L1420 1200H1556M780 1195V1568M860 1050V1100L900 1160V1200M690 1378H900M690 1380V1420L500 1470M600 1280L660 1285H850L930 1340M720 1120L600 1280 610 1380 620 1568M640 1280L740 1200M500 1400L540 1410V1568M500 1470H820M1000 1195L980 1110H880M1100 1160V1460M1175 1190V1568M1255 1230V1568M1215 1200V1380M990 1470H1556M950 1380H1410M1420 1200V1300M1410 1300V1568M1290 1110H1500L1540 1160M1360 1110V1160L1300 1155M1430 1110V1190M1500 1110V1200M1330 1160V1230M1010 1290H1090M930 1210L860 1150M820 1470V1568M750 1380V1470M990 1380V1340H1090M640 1380V1280M1430 1320H1556M1520 1200V1320M1150 1020L1165 1060 1140 1110 1145 1190M1070 1020L1110 1020M500 1500H560M430 1530H530M60 1430V1568M240 1330L270 1250 300 1290 340 1400 260 1500 240 1568M160 155V190L190 195M570 1290L610 1300M1210 1200V1230L1290 1240"/>
            <path class="rb" d="M600 405H1140M600 440L740 255M990 1470H1556M410 1180L470 1180 540 1110 600 1000M0 640L90 690 160 750M0 1430L60 1400M820 810L980 840 1110 860M740 1130L700 1130 620 1260M820 1040L780 1090 780 1110"/>
          </g>

          <!-- highways: casing first, then fill -->
          <g class="tile" transform="matrix(.408 0 0 .357 -7 -10)">
            <path class="z1" d="M390 995V1115L432 1135 370 1260 318 1355 316 1420 375 1490 380 1535"/>
            <path class="z2" d="M390 995V1115L432 1135 370 1260 318 1355 316 1420 375 1490 380 1535"/>
            <path class="y1" d="M10 880L35 900 210 915 270 940 315 978 430 990 490 1050 690 1057 930 1060 980 1115 1025 1150 1080 1255 1150 1310 1162 1420 1163 1525"/>
            <path class="y2" d="M10 880L35 900 210 915 270 940 315 978 430 990 490 1050 690 1057 930 1060 980 1115 1025 1150 1080 1255 1150 1310 1162 1420 1163 1525"/>
          </g>
          <g class="tile" transform="matrix(.408 0 0 .361 -7 530)">
            <path class="z1" d="M380 10L400 40 540 110 560 220 640 235 632 400 660 445 960 690 1060 740 1125 790 1250 780 1330 810 1500 910 1519 923M560 160L700 180H1370L1519 190M470 220L360 320V760L350 1110 388 1145 430 1120 515 1055 580 1030 625 1048 855 1050 945 1097 1055 1083 1090 1097 1145 1100 1185 1115V200M362 400L970 418 1130 418 1160 385 1230 365 1360 362 1519 400M362 762H438V950L425 1000 425 1120 520 1290 690 1490 740 1568M388 1165L370 1230 290 1268 150 1272 100 1250H65V1275L100 1285 150 1272M330 1275L430 1297 510 1290M470 100L540 160 440 270M500 100L560 160M1185 1115L1250 1115 1350 1138 1460 1138 1519 1210"/>
            <path class="z2" d="M380 10L400 40 540 110 560 220 640 235 632 400 660 445 960 690 1060 740 1125 790 1250 780 1330 810 1500 910 1519 923M560 160L700 180H1370L1519 190M470 220L360 320V760L350 1110 388 1145 430 1120 515 1055 580 1030 625 1048 855 1050 945 1097 1055 1083 1090 1097 1145 1100 1185 1115V200M362 400L970 418 1130 418 1160 385 1230 365 1360 362 1519 400M362 762H438V950L425 1000 425 1120 520 1290 690 1490 740 1568M388 1165L370 1230 290 1268 150 1272 100 1250H65V1275L100 1285 150 1272M330 1275L430 1297 510 1290M470 100L540 160 440 270M500 100L560 160M1185 1115L1250 1115 1350 1138 1460 1138 1519 1210"/>
            <path class="y1" d="M1163 0V60L1125 120 1130 250 1165 370 1175 420 1220 468H1460L1490 485 1519 545M800 1065V1370L818 1425M680 1465L860 1455 950 1463 1225 1467 1250 1490 1280 1550 1519 1560"/>
            <path class="y2" d="M1163 0V60L1125 120 1130 250 1165 370 1175 420 1220 468H1460L1490 485 1519 545M800 1065V1370L818 1425M680 1465L860 1455 950 1463 1225 1467 1250 1490 1280 1550 1519 1560"/>
          </g>
          <g class="tile" transform="matrix(.408 0 0 .361 613 530)">
            <path class="z1" d="M-10 190H125L145 160 160 110 200 88 230 88 300 63 380 97 475 98 530 115 600 68 670 70 720 55 765 85 783 130V235L1055 238 1070 222 1220 218 1270 240 1400 325 1568 440M1270 240L1272 470 1240 600 1200 660 1040 780M0 400L80 448 160 460 270 513 350 515 530 550 580 600 720 735 790 740 870 775 1010 810M720 740L680 770 600 900 590 1000 555 1070 460 1120 400 1175M0 920L85 955 180 960 240 980 280 1020 420 880 460 905 555 1060 620 1110 780 1105 850 1095 935 1190V1568M-10 1210L130 1240 190 1200 290 1135M400 1568L650 1130 680 1060 740 1022H940L1010 1002H1180L1300 1037 1450 1045 1568 1150M1120 850L1170 870 1240 838 1330 853 1400 815 1470 780 1510 730 1520 690 1568 650M935 1423H980L1200 1568"/>
            <path class="z2" d="M-10 190H125L145 160 160 110 200 88 230 88 300 63 380 97 475 98 530 115 600 68 670 70 720 55 765 85 783 130V235L1055 238 1070 222 1220 218 1270 240 1400 325 1568 440M1270 240L1272 470 1240 600 1200 660 1040 780M0 400L80 448 160 460 270 513 350 515 530 550 580 600 720 735 790 740 870 775 1010 810M720 740L680 770 600 900 590 1000 555 1070 460 1120 400 1175M0 920L85 955 180 960 240 980 280 1020 420 880 460 905 555 1060 620 1110 780 1105 850 1095 935 1190V1568M-10 1210L130 1240 190 1200 290 1135M400 1568L650 1130 680 1060 740 1022H940L1010 1002H1180L1300 1037 1450 1045 1568 1150M1120 850L1170 870 1240 838 1330 853 1400 815 1470 780 1510 730 1520 690 1568 650M935 1423H980L1200 1568"/>
            <path class="y1" d="M-5 510L60 640 100 670 220 725 320 735 400 700 480 615 530 613 590 650 690 750 940 800 1110 850 1145 880 1185 1030 1240 1130 1330 1240 1568 1340M193 1200L242 1285 230 1320 180 1375 110 1410 102 1455M-5 1560L60 1540 115 1472H145L160 1520 200 1568"/>
            <path class="y2" d="M-5 510L60 640 100 670 220 725 320 735 400 700 480 615 530 613 590 650 690 750 940 800 1110 850 1145 880 1185 1030 1240 1130 1330 1240 1568 1340M193 1200L242 1285 230 1320 180 1375 110 1410 102 1455M-5 1560L60 1540 115 1472H145L160 1520 200 1568"/>
          </g>

          <g class="mtext">
            <text x="959" y="32">Johnson</text><text x="945" y="137">Buntzen Bay</text><text x="930" y="181">Lake Buntzen</text>
            <text class="green" x="763" y="50">Mount</text><text class="green" x="763" y="78">Seymour</text><text class="green" x="763" y="106">Provincial</text><text class="green" x="763" y="134">Park</text>
            <text class="river lake"><textPath href="#lakeLine" startOffset="50%">Coquitlam Lake</textPath></text>
            <text class="teal" x="255" y="228">Capilano Suspension</text><text class="teal" x="255" y="256">Bridge Park</text>
            <text x="480" y="317">Lynn Creek</text><text x="78" y="379">West</text><text x="79" y="403">Vancouver</text>
            <text x="334" y="419">North</text><text x="334" y="443">Vancouver</text>
            <text class="green" x="125" y="507">Stanley Park</text>
            <text class="hood" x="685" y="397">DEEP COVE</text><text x="761" y="454">Belcarra</text><text x="965" y="454">Anmore</text>
            <text class="city" x="193" y="606">Vancouver</text>
            <text class="hood" x="55" y="658">KITSILANO</text><text class="hood" x="255" y="683">MT PLEASANT</text>
            <text class="hood" x="351" y="718">EAST</text><text class="hood" x="351" y="736">VANCOUVER</text>
            <text class="hood" x="93" y="809">WEST SIDE</text><text class="hood" x="537" y="850">MAYWOOD</text>
            <text class="town" x="601" y="751">Burnaby</text>
            <text class="river"><textPath href="#fr1" startOffset="50%">Fraser River</textPath></text>
            <text class="river"><textPath href="#fr2" startOffset="50%">Fraser River</textPath></text>
            <text class="end" font-style="italic" x="74" y="1011">Sea Island</text>
            <text class="town" x="155" y="1118">Richmond</text>
            <text font-style="italic" x="704" y="1090">Annacis Island</text>
            <text x="930" y="588">Port Moody</text><text class="town" x="1146" y="595">Coquitlam</text>
            <text class="start" x="1103" y="685">Port Coquitlam</text>
            <text class="hood start" x="1243" y="536">E</text><text class="hood start" x="1221" y="554">MO</text><text class="hood start" x="1220" y="637">BIRCH</text><text class="hood start" x="1239" y="655">MANOR</text>
            <text class="hood" x="925" y="738">AUSTIN HEIGHTS</text><text class="hood" x="949" y="789">MAILLARDVILLE</text>
            <text class="hood" x="858" y="839">SAPPERTON</text><text class="hood" x="1072" y="827">MAYFAIR</text><text class="hood" x="1125" y="1001">GUILDFORD</text>
            <text class="town" x="984" y="1007">Surrey</text><text x="804" y="928">New</text><text x="804" y="952">Westminster</text>

            <use href="#sh" x="148" y="429"/><text class="shield" x="148" y="436">99</text>
            <use href="#sh" x="142" y="653"/><text class="shield" x="142" y="660">99</text>
            <use href="#sh" x="570" y="600"/><text class="shield" x="570" y="607">7A</text>
            <use href="#sh" x="508" y="662"/><text class="shield" x="508" y="669">7</text>
            <use href="#sh" x="403" y="791"/><text class="shield" x="403" y="798">1A</text>
            <use href="#sh" x="391" y="1057"/><text class="shield" x="391" y="1064">91</text>
            <use href="#sh" x="542" y="1094"/><text class="shield" x="542" y="1101">91</text>
            <use href="#sh" x="988" y="616"/><text class="shield" x="988" y="623">7A</text>
            <use href="#sh" x="756" y="873"/><text class="shield" x="756" y="880">1A</text>
            <use href="#sh" x="1199" y="821"/><text class="shield" x="1199" y="828">7B</text>
            <use href="#shw" x="689" y="1017"/><text class="shield" x="689" y="1024">91A</text>
            <use href="#sh" x="1262" y="951"/>
            <use href="#tch" x="295" y="368"/><text class="shield tc-num" x="295" y="375">1</text>
            <use href="#tch" x="463" y="645"/><text class="shield tc-num" x="463" y="652">1</text>
            <use href="#tch" x="762" y="792"/><text class="shield tc-num" x="762" y="799">1</text>
            <use href="#tch" x="1122" y="937"/><text class="shield tc-num" x="1122" y="944">1</text>
          </g>
          <g transform="translate(210 321)">
            <path d="M0 0C-3-17-19-24-19-38A19 19 0 0 1 19-38C19-24 3-17 0 0Z" fill="#54b1ca" stroke="#4496ab" stroke-width="1.500"/>
            <path fill="#fff" fill-rule="evenodd" d="M-12-38H-8V-42H-4V-45H4L6-42H12V-27H-12zM1-40a5 5 0 1 0 .1 0zM-10-46h2v2h2v2h-2v2h-2v-2h-2v-2h2z"/>
          </g>
          <use href="#pin" x="166" y="612"/><use href="#pin" x="386" y="628"/><use href="#pin" x="570" y="720"/>
          <use href="#pin" x="200" y="768"/><use href="#pin" x="436" y="902"/><use href="#pin" x="1126" y="591"/>
        </svg>
      </div>
    </section>
  </main>
</div>
<div class="win-corner"></div>
</body>
</html>
